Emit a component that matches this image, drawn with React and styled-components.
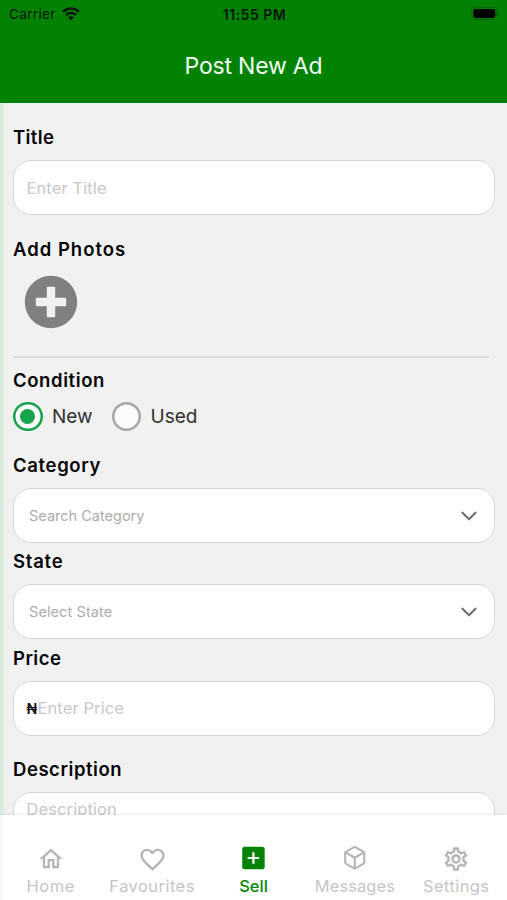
import React from 'react';
import styled, { createGlobalStyle, css } from 'styled-components';
import { MdOutlineHome, MdOutlineSettings, MdFavoriteBorder } from 'react-icons/md';
import { FaPlusCircle } from 'react-icons/fa';
import { FiBox, FiChevronDown } from 'react-icons/fi';

const Global = createGlobalStyle`
  * { box-sizing: border-box; }
  body { margin: 0; background: #fff; font-family: Inter, "Liberation Sans", sans-serif; }
`;

const Screen = styled.div`
  width: 507px;
  height: 900px;
  display: flex;
  flex-direction: column;
  overflow: hidden;
  background: linear-gradient(90deg, #d5ebda 0, #d9ecdd 2px, #f1f1f1 5px);
`;

const Header = styled.header`
  flex: none;
  height: 103px;
  background: #028202;
`;

const StatusBar = styled.div`
  height: 28px;
  padding: 0 7px 0 9px;
  display: grid;
  grid-template-columns: 1fr auto 1fr;
  align-items: center;
  color: #041504;
  font-size: 13.5px;
`;

const Carrier = styled.div`
  display: flex;
  align-items: center;
  gap: 6px;
  letter-spacing: 0.35px;
`;

const Clock = styled.div`
  font-size: 14px;
  font-weight: 600;
  letter-spacing: 0.5px;
`;

const BatteryIcon = styled.svg`
  justify-self: end;
`;

const PageTitle = styled.h1`
  margin: 0;
  height: 75px;
  display: flex;
  align-items: center;
  justify-content: center;
  color: #f4fbf4;
  font-size: 23px;
  font-weight: 400;
  letter-spacing: -0.2px;
`;

const Form = styled.main`
  flex: 1;
  min-height: 0;
  overflow: hidden;
  padding: 0 12px 0 13px;
  display: flex;
  flex-direction: column;
`;

const Label = styled.h2`
  flex: none;
  margin: ${p => p.$top}px 0 0;
  height: 24px;
  line-height: 24px;
  color: #050505;
  font-size: 18.5px;
  font-weight: 600;
  letter-spacing: ${p => p.$spacing || 0.55}px;
`;

const Field = styled.div`
  flex: none;
  height: 55px;
  margin-top: 11px;
  padding: ${p => (p.$select ? '0 12px 0 15px' : '0 13px 0 12.5px')};
  display: flex;
  align-items: center;
  border: 1px solid #d6d6d6;
  border-radius: 18px;
  background: #fff;
  color: ${p => (p.$select ? '#acacac' : '#c8c8c8')};
  font-size: ${p => (p.$select ? 14.5 : 16.5)}px;
  letter-spacing: ${p => p.$spacing || 0}px;
  ${p => p.$select && css`justify-content: space-between;`}
  ${p => p.$tall && css`
    height: 120px;
    align-items: flex-start;
    padding-top: 6px;
  `}
`;

const Currency = styled.span`
  width: 11px;
  color: #111;
  font-size: 14px;
  font-weight: 600;
  letter-spacing: 0;
`;

const AddPhoto = styled.div`
  flex: none;
  margin: 14px 0 0 11px;
  height: 54px;
  color: #808080;
`;

const Divider = styled.hr`
  flex: none;
  width: 476px;
  height: 2px;
  margin: 27px 0 0;
  border: 0;
  background: #dcdcdc;
`;

const RadioRow = styled.div`
  flex: none;
  height: 30px;
  margin-top: 10px;
  display: flex;
  gap: 19px;
`;

const Option = styled.div`
  display: flex;
  align-items: center;
  gap: 9.5px;
  color: #303030;
  font-size: 19px;
`;

const Radio = styled.span`
  width: 29.5px;
  height: 29.5px;
  display: grid;
  place-items: center;
  box-shadow: inset 0 0 0 2.5px ${p => (p.$on ? '#16a34a' : '#a5a5a5')};
  border-radius: 50%;
  background: #fcfcfc;
  &::after {
    content: '';
    width: 15px;
    height: 15px;
    border-radius: 50%;
    background: ${p => (p.$on ? '#16a34a' : 'transparent')};
  }
`;

const TabBar = styled.nav`
  flex: none;
  height: 85.5px;
  padding-top: 30px;
  display: grid;
  grid-template-columns: repeat(5, 1fr);
  background: linear-gradient(90deg, #f0f9ed 0, #fff 4px);
  box-shadow: 0 -1px 3px rgba(0, 0, 0, 0.08);
`;

const Tab = styled.div`
  display: flex;
  flex-direction: column;
  align-items: center;
  gap: 5px;
  color: ${p => (p.$active ? '#078407' : '#c5c5c5')};
  font-size: 16.5px;
  line-height: 20px;
  letter-spacing: ${p => p.$spacing || 0}px;
  font-weight: ${p => (p.$active ? 500 : 400)};
  white-space: nowrap;
  svg { color: ${p => (p.$active ? '#078407' : '#b5b5b5')}; }
`;

const TabIcon = styled.span`
  height: 26px;
  display: grid;
  place-items: center;
`;

function Wifi() {
  return (
    <svg width="18" height="14" viewBox="0 0 18 14" fill="none" stroke="#041504" strokeWidth="2.4">
      <path d="M1 4.8C5.5.4 12.5.4 17 4.8" />
      <path d="M4 8c3-2.8 7-2.8 10 0" />
      <path d="M9 13.3 6 10.4c1.7-1.5 4.3-1.5 6 0Z" fill="#041504" stroke="none" />
    </svg>
  );
}

function Battery() {
  return (
    <BatteryIcon width="29" height="14" viewBox="0 0 29 14">
      <rect x="0.7" y="0.4" width="25" height="12.2" rx="4" fill="none" stroke="#036403" strokeWidth="1.2" />
      <rect x="2.3" y="2" width="22" height="9" rx="2.4" fill="#000" />
      <path d="M27 4.5c1.6.8 1.6 3.2 0 4Z" fill="#036403" />
    </BatteryIcon>
  );
}

function SellIcon() {
  return (
    <svg width="24" height="24" viewBox="0 0 24 24">
      <rect x="1.2" y="0.8" width="22.5" height="22.4" rx="2.5" fill="currentColor" />
      <path d="M12.4 6.3v11.4M6.7 12h11.4" stroke="#fff" strokeWidth="2.2" />
    </svg>
  );
}

const tabs = [
  { name: 'Home', icon: <MdOutlineHome size={28} />, spacing: 0.6 },
  { name: 'Favourites', icon: <MdFavoriteBorder size={29} />, spacing: 0.45 },
  { name: 'Sell', icon: <SellIcon />, active: true },
  { name: 'Messages', icon: <FiBox size={25.5} />, spacing: 0.1 },
  { name: 'Settings', icon: <MdOutlineSettings size={28} />, spacing: 0.4 },
];

export default function App() {
  return (
    <>
      <Global />
      <Screen>
        <Header>
          <StatusBar>
            <Carrier>Carrier <Wifi /></Carrier>
            <Clock>11:55 PM</Clock>
            <Battery />
          </StatusBar>
          <PageTitle>Post New Ad</PageTitle>
        </Header>
        <Form>
          <Label $top={22} $spacing={0.4}>Title</Label>
          <Field $spacing={0.1}>Enter Title</Field>
          <Label $top={22} $spacing={1}>Add Photos</Label>
          <AddPhoto><FaPlusCircle size={54} /></AddPhoto>
          <Divider />
          <Label $top={9.5} $spacing={0.6}>Condition</Label>
          <RadioRow>
            <Option><Radio $on />New</Option>
            <Option><Radio />Used</Option>
          </RadioRow>
          <Label $top={21.5} $spacing={0.65}>Category</Label>
          <Field $select>Search Category<FiChevronDown size={26} color="#707070" /></Field>
          <Label $top={6.3} $spacing={0.75}>State</Label>
          <Field $select $spacing={0.1}>Select State<FiChevronDown size={26} color="#707070" /></Field>
          <Label $top={6.3} $spacing={0.45}>Price</Label>
          <Field $spacing={0.1}><Currency>₦</Currency>Enter Price</Field>
          <Label $top={21.4}>Description</Label>
          <Field $tall $spacing={0.1}>Description</Field>
        </Form>
        <TabBar>
          {tabs.map(t => (
            <Tab key={t.name} $active={t.active} $spacing={t.spacing}>
              <TabIcon>{t.icon}</TabIcon>
              {t.name}
            </Tab>
          ))}
        </TabBar>
      </Screen>
    </>
  );
}
